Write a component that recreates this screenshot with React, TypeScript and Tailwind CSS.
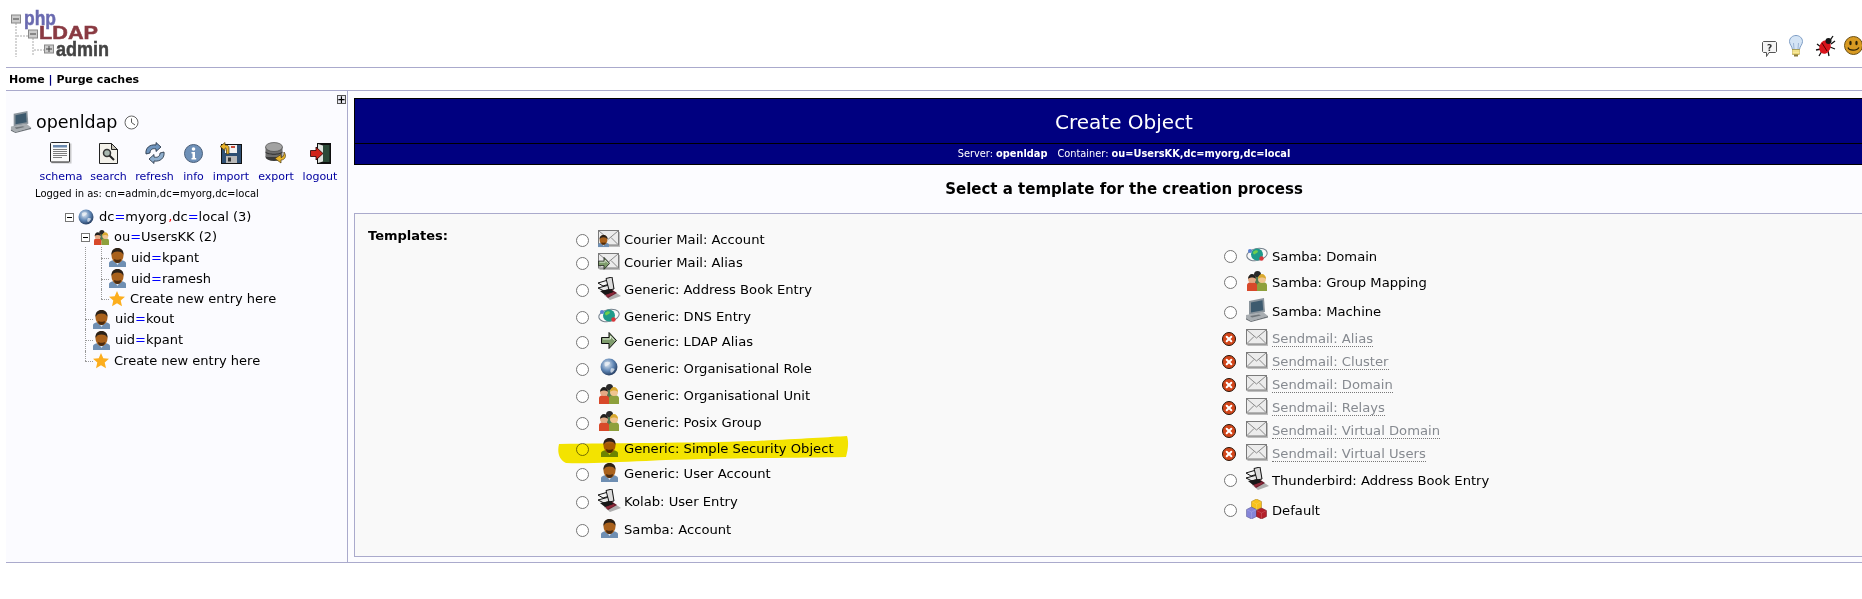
const font = "font-['DejaVu_Sans',Verdana,sans-serif]";

// Small icon drawings, the originals are phpLDAPadmin's png set
const PersonIcon = () => (
  <svg width="17" height="19" viewBox="0 0 17 19" className="shrink-0">
    <path d="M0 19v-4c0-1.500 2-2.500 5-3h7c3 .5 5 1.500 5 3v4z" fill="#6f8fb3" />
    <path d="M6.500 14l2 3 2-3z" fill="#dfe6ee" />
    <ellipse cx="8.500" cy="7.500" rx="6" ry="7.500" fill="#a9611c" />
    <path d="M2.500 7C2 2.500 5 0 8.500 0s6.500 2.500 6 7c-1-2.500-3-3.500-6-3.500S3.500 4.500 2.500 7z" fill="#2b2118" />
    <path d="M5 11c1 1 6 1 7 0 0 2.500-1.500 4-3.500 4S5 13.500 5 11z" fill="#4c2c10" />
  </svg>
);

const StarIcon = () => (
  <svg width="16" height="16" viewBox="0 0 16 16" className="shrink-0">
    <path d="M8 0l2.300 5.300 5.700.5-4.300 3.700 1.300 5.700L8 12.200 3 15.200l1.300-5.700L0 5.800l5.700-.5z" fill="#fcae1e" />
  </svg>
);

const GlobeIcon = ({ size = 16 }: { size?: number }) => (
  <svg width={size} height={size} viewBox="0 0 16 16" className="shrink-0">
    <defs>
      <radialGradient id="globe" cx="0.4" cy="0.35" r="0.7">
        <stop offset="0" stopColor="#dfe8f2" />
        <stop offset="0.55" stopColor="#5f86b5" />
        <stop offset="1" stopColor="#1f3557" />
      </radialGradient>
    </defs>
    <circle cx="8" cy="8" r="7.500" fill="url(#globe)" />
    <path d="M4 4c2-1 4-1 5 0 0 2-2 2-3 3s-2 1-2-3zM10 9c2 0 3 0 3 1-1 2-2 3-3 3s-1-3 0-4z" fill="#f2f5f8" opacity="0.7" />
  </svg>
);

const GroupIcon = ({ size = 20 }: { size?: number }) => (
  <svg width={size} height={size} viewBox="0 0 20 20" className="shrink-0">
    <circle cx="10.500" cy="3.500" r="3.500" fill="#2a2a2a" />
    <rect x="8" y="6" width="6" height="8" fill="#4f7a52" />
    <path d="M0 20v-6c0-2 2.500-3 5-3s5 1 5 3v6z" fill="#d8492a" />
    <path d="M10 20v-6c0-2 2.500-3 5-3s5 1 5 3v6z" fill="#8ea03c" />
    <circle cx="5" cy="8" r="4" fill="#e3a984" />
    <path d="M1 8c0-3 2-5 4-5s4 2 4 5C7 6 3 6 1 8z" fill="#20201f" />
    <circle cx="15" cy="8" r="4" fill="#efc48f" />
    <path d="M11 8c0-3 2-5 4-5s4 2 4 5c-2-2-6-2-8 0z" fill="#d9a92f" />
  </svg>
);

const ComputerIcon = ({ size = 24 }: { size?: number }) => (
  <svg width={size} height={size} viewBox="0 0 24 24" className="shrink-0">
    <path d="M4 3l15-3 1 14-16 3z" fill="#8a949c" />
    <path d="M6 4.500l11.500-2.300.7 10L6 14.500z" fill="#3d5a6e" />
    <path d="M1 17l17-3 5 4-17 5-5-3z" fill="#a9aeb2" />
    <path d="M1 20l5 3 17-5v1.500L6 24l-5-2.500z" fill="#6c7277" />
    <path d="M5 18l9-1.500 2 1-9 2z" fill="#70767b" />
  </svg>
);

const EnvelopeIcon = () => (
  <svg width="22" height="17" viewBox="0 0 22 17" className="shrink-0">
    <rect x="1.500" y="2" width="20.500" height="15" fill="#8e8e8e" opacity="0.55" />
    <rect x="0.500" y="0.500" width="20" height="14.500" fill="#ececec" stroke="#7a7a7a" />
    <path d="M1 1l9.500 8L20 1M1 14.500l7-7M20 14.500l-7-7" fill="none" stroke="#8a8a8a" />
  </svg>
);

const MailPersonIcon = () => (
  <div className="relative w-[22px] h-[17px] shrink-0">
    <EnvelopeIcon />
    <div className="absolute left-0 top-[5px] scale-[0.65] origin-top-left">
      <PersonIcon />
    </div>
  </div>
);

const ArrowIcon = ({ width = 16 }: { width?: number }) => (
  <svg width={width} height="17" viewBox="0 0 16 17" className="shrink-0">
    <path d="M.500 5.500H8V.500l7.500 8-7.500 8v-5H.500z" fill="#7e9c6c" stroke="#111" />
    <path d="M2 7h7.500V4l4 4.500" fill="none" stroke="#dfe8d8" />
  </svg>
);

const MailArrowIcon = () => (
  <div className="relative w-[22px] h-[17px] shrink-0">
    <EnvelopeIcon />
    <div className="absolute left-0 top-[4px] scale-[0.75] origin-top-left">
      <ArrowIcon />
    </div>
  </div>
);

const BookIcon = () => (
  <svg width="24" height="23" viewBox="0 0 24 23" className="shrink-0">
    <path d="M7 18l11-3 6 4-11 4z" fill="#555" opacity="0.45" />
    <path d="M5 14l9-2 6 4-9 5z" fill="#6e1c2c" />
    <path d="M1 6l10-3 5 3-10 3z" fill="#f4f4f4" stroke="#111" />
    <path d="M1 11l11-3 5 3-10 3z" fill="#e8e8e8" stroke="#111" />
    <path d="M9 1.500L15 0l2 12-5 1z" fill="#dcdcdc" stroke="#111" />
    <path d="M3 14l10-2 4 3-9 3z" fill="#181818" />
    <path d="M9 18l8-3v2l-7 3z" fill="#8d2a3a" />
  </svg>
);

const DnsIcon = () => (
  <svg width="22" height="17" viewBox="0 0 22 17" className="shrink-0">
    <ellipse cx="11" cy="8.500" rx="10.300" ry="6" fill="none" stroke="#74808c" transform="rotate(-12 11 8.500)" />
    <circle cx="11" cy="8.500" r="6" fill="#1f9a8a" />
    <path d="M7 6c2-2 4-2 5-1 0 2-2 2-3 3s-2 0-2-2z" fill="#6fce4f" />
    <circle cx="4" cy="5" r="2" fill="#5b7fd0" />
    <circle cx="15.500" cy="12.500" r="2.200" fill="#d9383c" />
  </svg>
);

const CubesIcon = () => (
  <svg width="22" height="20" viewBox="0 0 22 20" className="shrink-0">
    <path d="M10.500 0l5 2.500v6l-5 2.500-5-2.500v-6z" fill="#f7c21c" stroke="#a5791a" strokeWidth="0.500" />
    <path d="M5.500 8l5 2.500v7L5.500 20l-5-2.500v-7z" fill="#8585d8" stroke="#53538c" strokeWidth="0.500" />
    <path d="M15.500 9l5 2.500v6l-5 2.500-5-2.500v-6z" fill="#b4202a" stroke="#6c1018" strokeWidth="0.500" />
    <path d="M.5 10.500l5 2.500 5-2.500M5.500 13v7M10.500 11.500l5 2.500 5-2.500M15.500 14v6M5.500 2.500l5 2.500 5-2.500M10.500 5v6" fill="none" stroke="#fff" strokeOpacity="0.3" strokeWidth="0.500" />
  </svg>
);

const ErrorIcon = () => (
  <svg width="14" height="14" viewBox="0 0 14 14" className="shrink-0 -ml-[3px]">
    <circle cx="7" cy="7" r="6.500" fill="#d2461a" stroke="#2a1408" />
    <path d="M4.700 4.700l4.600 4.600M9.300 4.700L4.700 9.300" stroke="#fff" strokeWidth="2" strokeLinecap="round" />
  </svg>
);

const ClockIcon = () => (
  <svg width="15" height="15" viewBox="0 0 15 15" className="shrink-0">
    <circle cx="7.500" cy="7.500" r="6.500" fill="#fff" stroke="#666" />
    <path d="M7.500 3.500v4l3.500 2.500" fill="none" stroke="#555" />
  </svg>
);

const SchemaIcon = () => (
  <svg width="22" height="22" viewBox="0 0 22 22">
    <rect x="1.500" y="1.500" width="20" height="20" fill="#999" opacity="0.5" />
    <rect x="0.500" y="0.500" width="19" height="19.500" rx="1" fill="#fafafa" stroke="#222" />
    <rect x="3" y="3" width="14" height="2.500" fill="#6a88ad" />
    <path d="M3 7.500h14M3 9.500h14M3 11.500h14M3 13.500h14M3 15.500h9" stroke="#7c7c7c" />
  </svg>
);

const SearchIcon = () => (
  <svg width="19" height="21" viewBox="0 0 19 21">
    <path d="M.500.500h12l6 6v14H.500z" fill="#f3f1ea" stroke="#222" />
    <path d="M12.500.500v6h6z" fill="#c9c6ba" stroke="#222" />
    <circle cx="8" cy="10" r="3.500" fill="#a9b8b0" stroke="#333" strokeWidth="1.500" />
    <path d="M10.500 12.500l4.500 4.500" stroke="#222" strokeWidth="2" />
  </svg>
);

const RefreshIcon = () => (
  <svg width="22" height="22" viewBox="0 0 22 22">
    <path d="M2 12C1 6 6 2 12 3V.500l5 4.500-5 4.500V7C8 6 6 8 6 11z" fill="#6f94bd" stroke="#1e2c3c" strokeWidth="0.800" />
    <path d="M20 10c1 6-4 10-10 9v2.500l-5-4.500 5-4.500V15c4 1 6-1 6-4z" fill="#8eadcc" stroke="#1e2c3c" strokeWidth="0.800" />
  </svg>
);

const InfoIcon = () => (
  <svg width="19" height="19" viewBox="0 0 19 19">
    <circle cx="9.500" cy="9.500" r="9" fill="#6e90b8" stroke="#4a5f7a" />
    <circle cx="9.500" cy="5" r="1.800" fill="#fff" />
    <path d="M7.500 8h3.500v6h1.200v1.500H7.500V14h1V9.500h-1z" fill="#fff" />
  </svg>
);

const ImportIcon = () => (
  <svg width="22" height="22" viewBox="0 0 22 22">
    <rect x="1.500" y="2.500" width="20" height="19" fill="#2e4f73" stroke="#111" />
    <rect x="5" y="3" width="12" height="8" fill="#f2f2f2" />
    <rect x="11" y="4" width="4" height="2" fill="#c94a3a" />
    <rect x="6" y="14" width="11" height="7" fill="#b9b9b9" />
    <rect x="8" y="15.500" width="3" height="4" fill="#333" />
    <path d="M9 12V6C9 3.500 7 3 5 3V.500L0 4.500l5 4V6c1 0 1.500 .5 1.500 1.500V12z" fill="#e8b32a" stroke="#4c3a10" strokeWidth="0.700" />
  </svg>
);

const ExportIcon = () => (
  <svg width="22" height="22" viewBox="0 0 22 22">
    <ellipse cx="9" cy="15" rx="8.500" ry="4" fill="#3a3a3a" />
    <rect x="0.500" y="5" width="17" height="10" fill="#6d6d6d" />
    <path d="M.500 9.500c2 3 15 3 17 0v1c-2 3-15 3-17 0z" fill="#2e2e2e" />
    <ellipse cx="9" cy="5" rx="8.500" ry="4.500" fill="#a2a2a2" stroke="#3a3a3a" strokeWidth="0.600" />
    <path d="M19 10c3 4 1 8-3 8v3l-6-4.500 6-4v3c2 0 3-2 3-5.500z" fill="#e8b32a" stroke="#4c3a10" strokeWidth="0.700" />
  </svg>
);

const LogoutIcon = () => (
  <svg width="21" height="21" viewBox="0 0 21 21">
    <rect x="7" y="0" width="14" height="21" fill="#0f0f0f" />
    <rect x="13" y="2" width="6.500" height="17" fill="#2c4a38" />
    <path d="M8 1l5 1.500v16L8 20z" fill="#dfe4df" />
    <path d="M.500 7.500H6V4l7 6.500L6 17v-3.500H.500z" fill="#d0241a" stroke="#200" strokeWidth="0.800" />
  </svg>
);

const HelpIcon = () => (
  <svg width="15" height="16" viewBox="0 0 15 16">
    <path d="M1.500.500h12l1 1v9l-1 1H7l-2.500 4v-4h-3l-1-1v-9z" fill="#f5f5f5" stroke="#555" />
    <text x="7.500" y="9.500" textAnchor="middle" fontSize="9" fontWeight="700" fill="#333" fontFamily="DejaVu Sans">?</text>
  </svg>
);

const BulbIcon = () => (
  <svg width="14" height="22" viewBox="0 0 14 22">
    <path d="M7 .500c3.500 0 6.500 2.500 6.500 6 0 3-2.500 4.500-3 8h-7c-.5-3.500-3-5-3-8 0-3.500 3-6 6.500-6z" fill="#d4e4f5" stroke="#7d9cc4" />
    <path d="M5 14L4.500 8M9 14l.5-6" stroke="#9db6d6" fill="none" />
    <rect x="3.500" y="14.500" width="7" height="5" fill="#e6cd5a" stroke="#a08a2a" strokeWidth="0.500" />
    <path d="M3.500 16h7M3.500 17.800h7" stroke="#fff6b8" />
    <rect x="5" y="19.500" width="4" height="2" fill="#8a7a3a" />
  </svg>
);

const BugIcon = () => (
  <svg width="21" height="22" viewBox="0 0 21 22">
    <path d="M2 9l4 3M1 15l5-1M4 21l3-5M18 1l-4 6M20 6l-4 3M20 14l-5-2M14 21l-1-5" stroke="#111" strokeWidth="1.300" fill="none" />
    <ellipse cx="10" cy="12" rx="5.500" ry="7" fill="#d8141c" transform="rotate(25 10 12)" />
    <circle cx="13.500" cy="6" r="3" fill="#161616" />
    <path d="M7 8l5 8" stroke="#500" />
  </svg>
);

const SmileyIcon = () => (
  <svg width="18" height="19" viewBox="0 0 18 19" className="mb-[2px] ml-[-4px]">
    <circle cx="9.500" cy="9.500" r="9" fill="#d89a22" stroke="#6b4f14" />
    <ellipse cx="6.500" cy="7" rx="1.200" ry="2.200" fill="#2a2008" />
    <ellipse cx="12.500" cy="7" rx="1.200" ry="2.200" fill="#2a2008" />
    <path d="M4 11.500c1 3.500 9 3.500 11 0" fill="none" stroke="#2a2008" strokeWidth="1.200" />
  </svg>
);

const Logo = () => (
  <svg width="112" height="54" viewBox="0 0 112 54" className="mt-[5px] ml-[10px]">
    <path d="M6 18v34M23 33v18M7 31h11M24 45h10" stroke="#d5d5d5" strokeDasharray="2 1" strokeWidth="2" fill="none" />
    <rect x="1.500" y="10" width="9" height="8" fill="#ccc" stroke="#888" />
    <path d="M3 14h6" stroke="#444" />
    <rect x="18.500" y="25" width="9" height="8" fill="#ccc" stroke="#888" />
    <path d="M20 29h6" stroke="#444" />
    <rect x="34.500" y="40" width="9" height="8" fill="#ccc" stroke="#888" />
    <path d="M39 41v6M36 44h6" stroke="#444" />
    <text x="14" y="20" fontSize="21" fontWeight="700" fill="#6a6ab0" stroke="#6a6ab0" strokeWidth="0.500" fontFamily="Liberation Sans" textLength="32" lengthAdjust="spacingAndGlyphs">php</text>
    <text x="29" y="34" fontSize="19" fontWeight="700" fill="#8a3a42" stroke="#8a3a42" strokeWidth="0.500" fontFamily="Liberation Sans" textLength="59" lengthAdjust="spacingAndGlyphs">LDAP</text>
    <text x="46" y="51" fontSize="21" fontWeight="700" fill="#444" stroke="#444" strokeWidth="0.500" fontFamily="Liberation Sans" textLength="53" lengthAdjust="spacingAndGlyphs">admin</text>
  </svg>
);

const tools = [
  { label: "schema", icon: <SchemaIcon />, width: "w-[42px]" },
  { label: "search", icon: <SearchIcon />, width: "w-[35px]" },
  { label: "refresh", icon: <RefreshIcon />, width: "w-[39px]" },
  { label: "info", icon: <InfoIcon />, width: "w-[21px]" },
  { label: "import", icon: <ImportIcon />, width: "w-[36px]" },
  { label: "export", icon: <ExportIcon />, width: "w-[36px]" },
  { label: "logout", icon: <LogoutIcon />, width: "w-[34px]" },
];

type TreeRowProps = {
  depth: number;
  height: string;
  icon: React.ReactNode;
  expander?: boolean;
  last?: boolean;
  children: React.ReactNode;
};

const guide = "border-l border-dotted border-[#999]";

const TreeRow = ({ depth, height, icon, expander, last, children }: TreeRowProps) => (
  <div className={`flex items-center ${height}`}>
    {depth === 0 && <span className="w-[65px] shrink-0" />}
    {depth > 0 && <span className="w-[85px] shrink-0" />}
    {depth === 2 && <span className={`w-[16px] self-stretch shrink-0 ${guide}`} />}
    {depth > 0 && !expander && (
      <span className="relative w-[8px] self-stretch shrink-0">
        <span className={`absolute left-0 top-0 ${last ? "h-1/2" : "h-full"} ${guide}`} />
        <span className="absolute left-0 top-1/2 w-[8px] border-t border-dotted border-[#999]" />
      </span>
    )}
    {expander && (
      <span className={`relative flex items-center justify-center w-[9px] h-[9px] bg-white border border-[#777] shrink-0 ${depth > 0 ? "-ml-[4px] mr-[4px]" : "mr-[4px]"}`}>
        <span className="w-[5px] border-t border-black" />
      </span>
    )}
    {icon}
    <span className="ml-[5px] whitespace-nowrap text-[13px] text-black">{children}</span>
  </div>
);

const Eq = () => <span className="text-[#0000ff]">=</span>;

const leftTemplates = [
  { label: "Courier Mail: Account", icon: <MailPersonIcon />, height: "h-[22px]" },
  { label: "Courier Mail: Alias", icon: <MailArrowIcon />, height: "h-[24px]" },
  { label: "Generic: Address Book Entry", icon: <BookIcon />, height: "h-[30px]" },
  { label: "Generic: DNS Entry", icon: <DnsIcon />, height: "h-[24px]" },
  { label: "Generic: LDAP Alias", icon: <ArrowIcon />, height: "h-[26px]" },
  { label: "Generic: Organisational Role", icon: <GlobeIcon size={18} />, height: "h-[28px]" },
  { label: "Generic: Organisational Unit", icon: <GroupIcon />, height: "h-[26px]" },
  { label: "Generic: Posix Group", icon: <GroupIcon />, height: "h-[28px]" },
  { label: "Generic: Simple Security Object", icon: <PersonIcon />, height: "h-[24px]" },
  { label: "Generic: User Account", icon: <PersonIcon />, height: "h-[26px]" },
  { label: "Kolab: User Entry", icon: <BookIcon />, height: "h-[30px]" },
  { label: "Samba: Account", icon: <PersonIcon />, height: "h-[26px]" },
];

const rightTemplates = [
  { label: "Samba: Domain", icon: <DnsIcon />, height: "h-[24px]" },
  { label: "Samba: Group Mapping", icon: <GroupIcon />, height: "h-[28px]" },
  { label: "Samba: Machine", icon: <ComputerIcon />, height: "h-[31px]" },
  { label: "Sendmail: Alias", icon: <EnvelopeIcon />, height: "h-[23px]", disabled: true },
  { label: "Sendmail: Cluster", icon: <EnvelopeIcon />, height: "h-[23px]", disabled: true },
  { label: "Sendmail: Domain", icon: <EnvelopeIcon />, height: "h-[23px]", disabled: true },
  { label: "Sendmail: Relays", icon: <EnvelopeIcon />, height: "h-[23px]", disabled: true },
  { label: "Sendmail: Virtual Domain", icon: <EnvelopeIcon />, height: "h-[23px]", disabled: true },
  { label: "Sendmail: Virtual Users", icon: <EnvelopeIcon />, height: "h-[23px]", disabled: true },
  { label: "Thunderbird: Address Book Entry", icon: <BookIcon />, height: "h-[30px]" },
  { label: "Default", icon: <CubesIcon />, height: "h-[30px]" },
];

type Template = { label: string; icon: React.ReactNode; height: string; disabled?: boolean };

const TemplateRow = ({ label, icon, height, disabled }: Template) => (
  <div className={`flex items-center whitespace-nowrap text-[13.150px] ${height}`}>
    <span className="flex items-center justify-center w-[14px] -ml-[1px] shrink-0">
      {disabled ? <ErrorIcon /> : <span className="w-[13px] h-[13px] rounded-full bg-white border border-[#767676]" />}
    </span>
    <span className="flex items-center justify-center w-[26px] ml-[7px] -mt-[4px] shrink-0">{icon}</span>
    <span className={`ml-[2px] ${disabled ? "text-[#868a90] border-b border-dotted border-[#777] leading-[14px]" : "text-black"}`}>{label}</span>
  </div>
);

export default function App() {
  return (
    <div className={`relative w-[1862px] h-[599px] overflow-hidden bg-white ${font}`}>
      <header className="flex justify-between h-[68px] ml-[6px] border-b border-[#aaaacc]">
        <div className="-ml-[6px]">
          <Logo />
        </div>
        <div className="flex items-end gap-[12px] pb-[10px]">
          <HelpIcon />
          <BulbIcon />
          <BugIcon />
          <SmileyIcon />
        </div>
      </header>

      <nav className="flex items-center h-[23px] ml-[6px] pl-[3px] pt-[2px] border-b border-[#aaaacc] text-[11px] font-bold text-black">
        <span>Home <span className="text-[#000080]">|</span> Purge caches</span>
      </nav>

      <div className="flex h-[472px] ml-[6px] border-b border-[#aaaacc]">
        <aside className="relative w-[342px] shrink-0 bg-[#fbfbff] border-r border-[#aaaacc]">
          <div className="flex justify-end pt-[4px] pr-[1px]">
            <span className="flex items-center justify-center w-[9px] h-[9px] bg-[#e8e8f0] border border-[#555] text-[10px] leading-none font-bold">+</span>
          </div>
          <div className="flex items-center pl-[4px] mt-[5px] h-[26px]">
            <ComputerIcon size={22} />
            <span className="ml-[4px] text-[17.500px] text-black">openldap</span>
            <span className="ml-[7px]"><ClockIcon /></span>
          </div>
          <div className="flex pl-[34px] gap-[9px] mt-[7px]">
            {tools.map((tool) => (
              <div key={tool.label} className={`flex flex-col items-center ${tool.width}`}>
                <div className="flex items-center justify-center h-[22px]">{tool.icon}</div>
                <span className="mt-[5px] text-[11px] leading-[16px] text-[#0000a0] whitespace-nowrap">{tool.label}</span>
              </div>
            ))}
          </div>
          <p className="pl-[29px] mt-[2px] text-[10px] leading-[14px] text-black whitespace-nowrap">Logged in as: cn=admin,dc=myorg,dc=local</p>

          <div className="mt-[6px] -ml-[6px]">
            <TreeRow depth={0} height="h-[20px]" expander icon={<GlobeIcon />}>
              dc<Eq />myorg <span className="text-[#ff0000] -ml-[3px]">,</span>dc<Eq />local (3)
            </TreeRow>
            <TreeRow depth={1} height="h-[20px]" expander icon={<GroupIcon size={15} />}>
              ou<Eq />UsersKK (2)
            </TreeRow>
            <TreeRow depth={2} height="h-[21px]" icon={<PersonIcon />}>uid<Eq />kpant</TreeRow>
            <TreeRow depth={2} height="h-[21px]" icon={<PersonIcon />}>uid<Eq />ramesh</TreeRow>
            <TreeRow depth={2} height="h-[20px]" last icon={<StarIcon />}>Create new entry here</TreeRow>
            <TreeRow depth={1} height="h-[20px]" icon={<PersonIcon />}>uid<Eq />kout</TreeRow>
            <TreeRow depth={1} height="h-[22px]" icon={<PersonIcon />}>uid<Eq />kpant</TreeRow>
            <TreeRow depth={1} height="h-[20px]" last icon={<StarIcon />}>Create new entry here</TreeRow>
          </div>
        </aside>

        <main className="pl-[6px] bg-[#fcfcff] shrink-0 w-[1546px]">
          <div className="mt-[7px] border border-black bg-[#000080] text-white text-center">
            <div className="h-[45px] pt-[2px] flex items-center justify-center text-[20px] border-b border-black">Create Object</div>
            <div className="h-[20px] flex items-center justify-center text-[9.800px]">
              <span>Server: <b>openldap</b></span>
              <span className="ml-[10px]">Container: <b>ou=UsersKK,dc=myorg,dc=local</b></span>
            </div>
          </div>
          <h3 className="mt-[13px] h-[21px] text-center text-[15px] font-bold text-black leading-[23px]">Select a template for the creation process</h3>
          <div className="mt-[14px] h-[344px] flex items-center bg-[#f9f9f9] border border-[#aaaacc]">
            <span className="self-start mt-[12px] ml-[13px] w-[208px] shrink-0 text-[13px] font-bold text-black">Templates:</span>
            <div className="w-[648px] shrink-0 mt-[2px]">
              {leftTemplates.map((t) => <TemplateRow key={t.label} {...t} />)}
            </div>
            <div>
              {rightTemplates.map((t) => <TemplateRow key={t.label} {...t} />)}
            </div>
          </div>
        </main>
      </div>

      {/* yellow marker stroke over the Simple Security Object row */}
      <svg width="300" height="32" viewBox="0 0 300 32" className="absolute left-[556px] top-[434px] mix-blend-multiply pointer-events-none">
        <path d="M3 10C60 9 130 9 200 7 240 5 275 3 291 2 293 8 292 16 290 23 240 24 150 24 90 27 60 28 30 30 10 29 3 26 1 18 3 10z" fill="#f9e900" />
      </svg>
    </div>
  );
}
